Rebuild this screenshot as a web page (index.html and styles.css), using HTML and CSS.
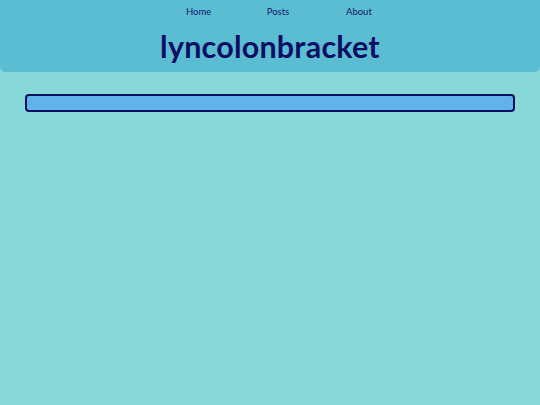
FILE: index.html
```html
<!DOCTYPE html>
<html>
<head>
<meta charset="utf-8">
<link rel="stylesheet" href="styles.css">
</head>
<body>
<header class="site-header">
  <nav class="nav">
    <a class="nav-link" href="#">Home</a>
    <a class="nav-link" href="#">Posts</a>
    <a class="nav-link" href="#">About</a>
  </nav>
  <h1 class="title">lyncolonbracket</h1>
</header>
<main class="content">
  <div class="bar"></div>
</main>
</body>
</html>
```
FILE: styles.css
```css
html, body {
  margin: 0;
  padding: 0;
}
body {
  background: #88d7d9;
  font-family: "Lato", "Open Sans", sans-serif;
  width: 540px;
  height: 405px;
}
.site-header {
  background: #5bbdd2;
  height: 72px;
  border-radius: 0 0 5px 5px;
  display: flex;
  flex-direction: column;
  align-items: center;
}
.nav {
  display: flex;
  justify-content: center;
  gap: 56px;
  padding-top: 6px;
  padding-left: 16px;
}
.nav-link {
  color: #131a6e;
  text-decoration: none;
  font-size: 9.5px;
  line-height: 12px;
  width: 24px;
  text-align: center;
}
.title {
  margin: 11px 0 0 0;
  font-size: 30.5px;
  line-height: 34px;
  font-weight: 700;
  color: #0e0f64;
  letter-spacing: 0.2px;
}
.content {
  padding: 22px 25px 0 25px;
}
.bar {
  height: 14px;
  background: #62b2ec;
  border: 2px solid #0d0f5e;
  border-radius: 4px;
}
```
